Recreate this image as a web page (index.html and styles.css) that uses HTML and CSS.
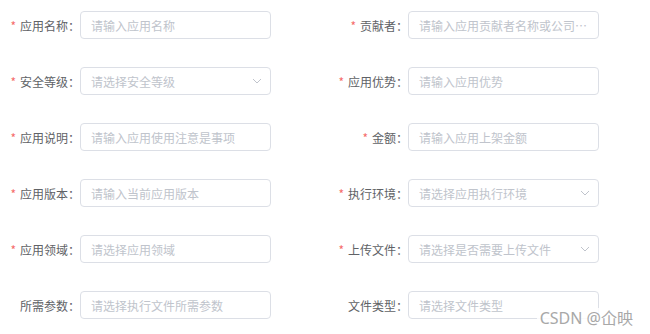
FILE: index.html
```html
<!DOCTYPE html>
<html lang="en">

<head>
    <meta charset="UTF-8" />
    <meta name="viewport" content="width=device-width, initial-scale=1.0" />
    <link rel="stylesheet" href="styles.css">
    <title>应用信息</title>
</head>

<body>

    <!-- form grid: two columns, six rows -->
    <form class="app-form">
        <div class="form-item">
            <label class="form-label required">应用名称：</label>
            <div class="form-input"><input type="text" placeholder="请输入应用名称"></div>
        </div>
        <div class="form-item">
            <label class="form-label required">贡献者：</label>
            <div class="form-input"><input type="text" placeholder="请输入应用贡献者名称或公司名称"></div>
        </div>

        <div class="form-item">
            <label class="form-label required">安全等级：</label>
            <div class="form-input select">
                <input type="text" readonly placeholder="请选择安全等级">
                <svg class="arrow" viewBox="0 0 10 6"><path d="M1 1 L5 5 L9 1" /></svg>
            </div>
        </div>
        <div class="form-item">
            <label class="form-label required">应用优势：</label>
            <div class="form-input"><input type="text" placeholder="请输入应用优势"></div>
        </div>

        <div class="form-item">
            <label class="form-label required">应用说明：</label>
            <div class="form-input"><input type="text" placeholder="请输入应用使用注意是事项"></div>
        </div>
        <div class="form-item">
            <label class="form-label required">金额：</label>
            <div class="form-input"><input type="text" placeholder="请输入应用上架金额"></div>
        </div>

        <div class="form-item">
            <label class="form-label required">应用版本：</label>
            <div class="form-input"><input type="text" placeholder="请输入当前应用版本"></div>
        </div>
        <div class="form-item">
            <label class="form-label required">执行环境：</label>
            <div class="form-input select">
                <input type="text" readonly placeholder="请选择应用执行环境">
                <svg class="arrow" viewBox="0 0 10 6"><path d="M1 1 L5 5 L9 1" /></svg>
            </div>
        </div>

        <div class="form-item">
            <label class="form-label required">应用领域：</label>
            <div class="form-input"><input type="text" placeholder="请选择应用领域"></div>
        </div>
        <div class="form-item">
            <label class="form-label required">上传文件：</label>
            <div class="form-input select">
                <input type="text" readonly placeholder="请选择是否需要上传文件">
                <svg class="arrow" viewBox="0 0 10 6"><path d="M1 1 L5 5 L9 1" /></svg>
            </div>
        </div>

        <div class="form-item">
            <label class="form-label">所需参数：</label>
            <div class="form-input"><input type="text" placeholder="请选择执行文件所需参数"></div>
        </div>
        <div class="form-item">
            <label class="form-label">文件类型：</label>
            <div class="form-input"><input type="text" placeholder="请选择文件类型"></div>
        </div>
    </form>

    <div class="watermark">CSDN @仚映</div>

</body>

</html>
```

FILE: styles.css
```css
:root {
    --border: #dcdfe6;
    --label: #606266;
    --placeholder: #c0c4cc;
    --danger: #f56c6c;
}

* {
    box-sizing: border-box;
}

body {
    margin: 0;
    background-color: #fff;
    font-family: "Noto Sans CJK SC", "Noto Sans", sans-serif;
    font-size: 12px;
    height: 334px;
    overflow: hidden;
    position: relative;
}

.app-form {
    display: grid;
    grid-template-columns: 271px 271px;
    column-gap: 57px;
    row-gap: 28px;
    padding-top: 11px;
}

.form-item {
    display: flex;
    align-items: center;
    height: 28px;
}

.form-label {
    width: 80px;
    flex-shrink: 0;
    text-align: right;
    color: var(--label);
    white-space: nowrap;
}

.form-label.required::before {
    content: '*';
    color: var(--danger);
    margin-right: 4px;
}

.form-input {
    position: relative;
    width: 191px;
    height: 28px;
}

.form-input input {
    width: 100%;
    height: 100%;
    border: 1px solid var(--border);
    border-radius: 4px;
    padding: 0 10px;
    font-family: inherit;
    font-size: 12px;
    color: var(--label);
    outline: 0;
    text-overflow: ellipsis;
    background: #fff;
}

.form-input input::placeholder {
    color: var(--placeholder);
}

.form-input.select input {
    padding-right: 30px;
    cursor: pointer;
}

/* chevron sits inside the select box */
.arrow {
    position: absolute;
    right: 9px;
    top: 11px;
    width: 10px;
    height: 6px;
    fill: none;
    stroke: var(--placeholder);
    stroke-width: 1;
}

.watermark {
    position: absolute;
    right: 14px;
    bottom: 6px;
    font-size: 16px;
    line-height: 20px;
    color: #a8a8a8;
    font-family: "Noto Sans", "Noto Sans CJK SC", sans-serif;
    background: rgba(255, 255, 255, 0.85);
    padding: 0 3px;
}
```
